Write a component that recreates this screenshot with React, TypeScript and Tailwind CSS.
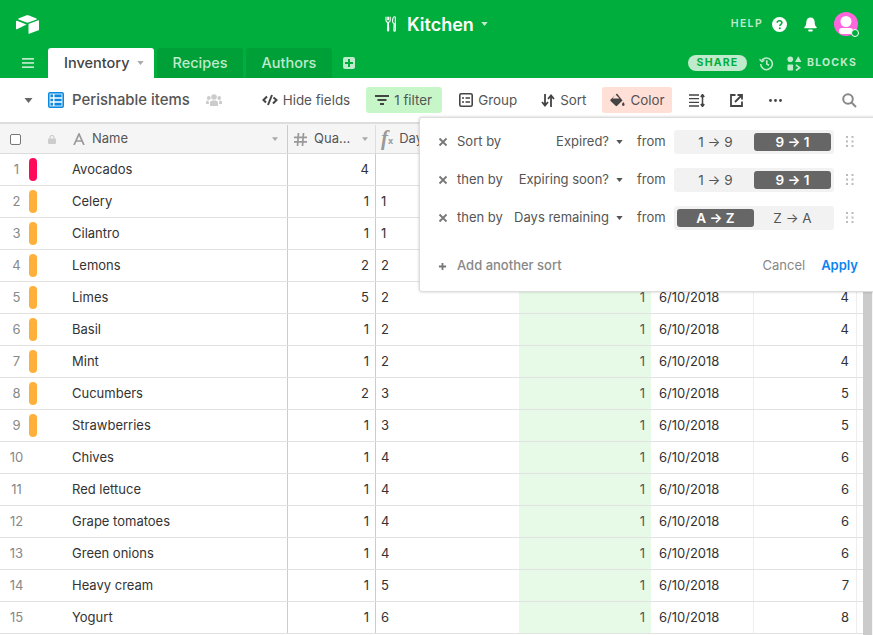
import React from "react";

const rows: [string, string, number, string, string, string][] = [
  ["Avocados", "r", 4, "", "", ""],
  ["Celery", "o", 1, "1", "", ""],
  ["Cilantro", "o", 1, "1", "", ""],
  ["Lemons", "o", 2, "2", "", ""],
  ["Limes", "o", 5, "2", "1", "4"],
  ["Basil", "o", 1, "2", "1", "4"],
  ["Mint", "o", 1, "2", "1", "4"],
  ["Cucumbers", "o", 2, "3", "1", "5"],
  ["Strawberries", "o", 1, "3", "1", "5"],
  ["Chives", "", 1, "4", "1", "6"],
  ["Red lettuce", "", 1, "4", "1", "6"],
  ["Grape tomatoes", "", 1, "4", "1", "6"],
  ["Green onions", "", 1, "4", "1", "6"],
  ["Heavy cream", "", 1, "5", "1", "7"],
  ["Yogurt", "", 1, "6", "1", "8"],
];

function Caret({ className }: { className: string }) {
  return (
    <svg viewBox="0 0 8 5" className={className} fill="currentColor">
      <path d="M0 0h8L4 5z" />
    </svg>
  );
}

function Logo() {
  return (
    <svg viewBox="0 0 23 19" className="h-[19px] w-[23px]" fill="white">
      <path d="M10.600.3 2.500 3.400c-.4.200-.4.800 0 1l8.100 3.200c.6.200 1.200.2 1.800 0l8.100-3.200c.4-.2.400-.8 0-1L12.400.3c-.6-.2-1.200-.2-1.800 0z" />
      <path d="M12.500 9.300v9c0 .4.300.6.700.5l9.300-3.500c.3-.1.500-.3.500-.6V5.800c0-.4-.3-.6-.7-.5l-9.300 3.500c-.3.100-.5.300-.5.500z" />
      <path d="M10.500 9.600 1 5.800c-.5-.2-1 .1-1 .6v7.300c0 .4.500.7.900.5l3.600-1.700z" />
    </svg>
  );
}

function Utensils() {
  return (
    <svg viewBox="0 0 12 16" className="h-[16px] w-[12px]" fill="none" stroke="white" strokeWidth="1.100">
      <path d="M1 .8v3.600c0 1.100.8 1.800 1.800 1.900l-.3 8c0 .9 1.200.9 1.200 0l-.3-8c1-.1 1.800-.8 1.800-1.900V.8M2.800.8v3.400M3.500.8v3.400" />
      <path d="M9.500.8C8 .8 7.600 3 7.600 5c0 1.600.7 2.500 1.500 2.700l-.2 6.900c0 .9 1.400.9 1.400 0V1.400c0-.4-.3-.6-.8-.6z" />
    </svg>
  );
}

function TabBtn({ label }: { label: string }) {
  return (
    <div className="flex h-[30px] w-[86px] items-center justify-center rounded-t-[3px] bg-[#00a038] pb-[1px] text-[14.500px] font-medium text-[#bfeacc]">
      {label}
    </div>
  );
}

function ToolBtn({ icon, label, className }: { icon: React.ReactNode; label: string; className: string }) {
  return (
    <div className={`flex h-[26px] items-center gap-[5px] rounded-[3px] text-[13.400px] text-[#555] ${className}`}>
      {icon}
      <span>{label}</span>
    </div>
  );
}

function Toggle({ a, b, active }: { a: string; b: string; active: 0 | 1 }) {
  const on = "flex h-[18px] w-[77px] items-center justify-center rounded-[3px] bg-[#666] font-semibold text-white";
  const off = "flex h-[18px] w-[77px] items-center justify-center text-[#555]";
  return (
    <div className="flex h-[24px] w-[160px] items-center rounded-[3px] bg-[#f2f2f2] px-[3px] text-[13.500px]">
      <div className={active === 0 ? on : off}>{a}</div>
      <div className={active === 1 ? on : off}>{b}</div>
    </div>
  );
}

function X() {
  return (
    <svg viewBox="0 0 10 10" className="h-[10px] w-[10px] shrink-0" stroke="#777" strokeWidth="1.800" fill="none">
      <path d="M1.500 1.500l7 7M8.500 1.500l-7 7" />
    </svg>
  );
}

function Dots() {
  return (
    <svg viewBox="0 0 8 12" className="h-[12px] w-[8px]" fill="#bbb">
      {[0, 4.500, 9].map((y) => (
        <g key={y}>
          <rect x="0" y={y} width="2" height="2" />
          <rect x="5.500" y={y} width="2" height="2" />
        </g>
      ))}
    </svg>
  );
}

function SortRow({ by, field, a, b, active }: { by: string; field: string; a: string; b: string; active: 0 | 1 }) {
  return (
    <div className="flex h-[24px] items-center text-[13px] text-[#555]">
      <X />
      <span className="ml-[9px] w-[50px] shrink-0">{by}</span>
      <div className="flex w-[116px] items-center justify-end gap-[7px] whitespace-nowrap">
        <span>{field}</span>
        <Caret className="h-[4px] w-[7px] text-[#555]" />
      </div>
      <span className="ml-[14px] w-[37px]">from</span>
      <Toggle a={a} b={b} active={active} />
      <div className="ml-[12px]">
        <Dots />
      </div>
    </div>
  );
}

export default function App() {
  return (
    <div
      className="relative flex h-[635px] w-[873px] flex-col overflow-hidden bg-white"
      style={{ fontFamily: "Inter, 'Liberation Sans', sans-serif" }}
    >
      {/* Green header */}
      <div className="h-[78px] shrink-0 bg-[#00ae3d]">
        <div className="flex h-[48px] items-center pl-[16px] pr-[15px]">
          <Logo />
          <div className="ml-[346px] flex items-center">
            <Utensils />
            <span className="ml-[10px] text-[18px] font-semibold text-white">Kitchen</span>
            <Caret className="ml-[7px] h-[4px] w-[7px] text-[#bfeacc]" />
          </div>
          <div className="ml-auto flex items-center">
            <span className="text-[10.500px] font-semibold tracking-[1.350px] text-[#bfeacc]">HELP</span>
            <svg viewBox="0 0 16 16" className="ml-[9px] h-[15px] w-[15px]">
              <circle cx="8" cy="8" r="8" fill="white" />
              <path d="M5.500 6.200C5.600 4.700 6.700 4 8 4c1.500 0 2.500.9 2.500 2.100 0 1-.6 1.500-1.300 2-.6.4-.8.7-.8 1.400" fill="none" stroke="#00ae3d" strokeWidth="1.700" />
              <circle cx="8.300" cy="12" r="1.100" fill="#00ae3d" />
            </svg>
            <svg viewBox="0 0 14 16" className="ml-[17px] h-[15px] w-[13px]" fill="white">
              <path d="M7 .5c-2.700 0-4.500 2-4.500 4.800 0 3.200-.8 4.400-2 5.500-.4.400-.2 1.200.4 1.200h12.200c.6 0 .8-.8.400-1.200-1.200-1.100-2-2.300-2-5.500C11.500 2.500 9.700.5 7 .5z" />
              <rect x="4.500" y="13.500" width="5" height="2" rx="1" />
            </svg>
            <div className="relative ml-[17px] h-[24px] w-[24px] rounded-full bg-[#ff66dd]">
              <svg viewBox="0 0 24 24" className="h-[24px] w-[24px]" fill="white">
                <circle cx="12" cy="9.500" r="5.500" />
                <rect x="5" y="16" width="14" height="6" rx="3" />
              </svg>
              <div className="absolute right-[-1px] bottom-[-1px] h-[8px] w-[8px] rounded-full border border-white bg-[#00ae3d]" />
            </div>
          </div>
        </div>
        <div className="flex h-[30px] items-end pr-[16px]">
          <div className="flex h-[30px] w-[48px] items-center justify-center">
            <svg viewBox="0 0 12 10" className="ml-[8px] h-[10px] w-[12px]" fill="#bfeacc">
              <rect width="12" height="1.700" />
              <rect y="4.100" width="12" height="1.700" />
              <rect y="8.300" width="12" height="1.700" />
            </svg>
          </div>
          <div className="flex h-[30px] w-[106px] items-center rounded-t-[3px] bg-white pb-[1px] pl-[16px] text-[14.500px] font-medium text-[#444]">
            <span>Inventory</span>
            <Caret className="ml-[8px] h-[4px] w-[7px] text-[#aaa]" />
          </div>
          <div className="ml-[3px]">
            <TabBtn label="Recipes" />
          </div>
          <div className="ml-[3px]">
            <TabBtn label="Authors" />
          </div>
          <div className="mb-[9px] ml-[11px] flex h-[12px] w-[12px] items-center justify-center rounded-[2px] bg-[#bfeacc]">
            <svg viewBox="0 0 8 8" className="h-[8px] w-[8px]" fill="#00ae3d">
              <rect x="3" width="2" height="8" />
              <rect y="3" width="8" height="2" />
            </svg>
          </div>
          <div className="mb-[7px] ml-auto flex items-center">
            <div className="flex h-[16px] w-[59px] items-center justify-center rounded-full bg-[#bfeacc] text-[10.500px] font-bold tracking-[1.200px] text-[#00ae3d]">
              SHARE
            </div>
            <svg viewBox="0 0 16 16" className="ml-[12px] h-[15px] w-[15px]" fill="none" stroke="#bfeacc" strokeWidth="1.700">
              <path d="M2.800 5A6.200 6.200 0 1 1 1.800 8.500" />
              <path d="M.6 3.500l2.500 2.600 2.600-1.400" strokeWidth="1.300" />
              <path d="M8.300 4.500v4l2.500 1.500" />
            </svg>
            <svg viewBox="0 0 16 16" className="ml-[13px] h-[15px] w-[15px]" fill="#bfeacc">
              <circle cx="3.500" cy="3.500" r="3" />
              <path d="M12 .3l3.500 6.200h-7z" />
              <rect x=".5" y="9" width="6" height="6.500" rx="1" />
              <path d="M9.500 9.500l4 3-4 3" fill="none" stroke="#bfeacc" strokeWidth="1.800" />
            </svg>
            <span className="ml-[5px] text-[10.500px] font-bold tracking-[1.200px] text-[#bfeacc]">BLOCKS</span>
          </div>
        </div>
      </div>

      {/* Toolbar */}
      <div className="flex h-[46px] shrink-0 items-center border-b-2 border-[#ddd] pl-[24px]">
        <Caret className="h-[5px] w-[9px] text-[#666]" />
        <svg viewBox="0 0 16 16" className="ml-[15px] h-[16px] w-[16px]">
          <rect width="16" height="16" rx="2" fill="#0b88e0" />
          <path d="M5.700 2v12M2 6h12M2 10h12" stroke="white" strokeWidth="1.500" fill="none" />
          <rect x="2" y="2" width="12" height="12" fill="none" stroke="white" strokeWidth=".8" />
        </svg>
        <span className="ml-[8px] whitespace-nowrap text-[14.900px] font-medium text-[#555]">Perishable items</span>
        <svg viewBox="0 0 16 12" className="ml-[16px] h-[12px] w-[16px]" fill="#ccc">
          <circle cx="8" cy="3" r="2.800" />
          <circle cx="2.800" cy="4" r="1.900" />
          <circle cx="13.200" cy="4" r="1.900" />
          <path d="M4 12V8.500C4 7 5.500 6.500 8 6.500s4 .5 4 2V12z" />
          <path d="M0 10V8c0-1 1-1.500 2.500-1.500L3 10zM16 10V8c0-1-1-1.500-2.500-1.500L13 10z" />
        </svg>
        <ToolBtn
          className="ml-[40px]"
          label="Hide fields"
          icon={
            <svg viewBox="0 0 16 12" className="h-[12px] w-[16px]" fill="none" stroke="#444" strokeWidth="2">
              <path d="M5 2.500 1.500 6 4 8.500M11.500 3.500 14.500 6 11 9.500M10 1 6 11" />
            </svg>
          }
        />
        <ToolBtn
          className="ml-[16px] w-[76px] bg-[#c7f7c9] pl-[9px]"
          label="1 filter"
          icon={
            <svg viewBox="0 0 14 10" className="h-[10px] w-[14px]" fill="#444">
              <rect width="14" height="2" />
              <rect x="2.500" y="4" width="9" height="2" />
              <rect x="5" y="8" width="4" height="2" />
            </svg>
          }
        />
        <ToolBtn
          className="ml-[17px]"
          label="Group"
          icon={
            <svg viewBox="0 0 14 14" className="h-[14px] w-[14px]" fill="none" stroke="#444" strokeWidth="1.600">
              <rect x=".8" y=".8" width="12.400" height="12.400" rx="1.500" />
              <path d="M3 5h2M6.500 5H11M3 9h2M6.500 9H11" />
            </svg>
          }
        />
        <ToolBtn
          className="ml-[24px] gap-[5px]"
          label="Sort"
          icon={
            <svg viewBox="0 0 14 13" className="h-[13px] w-[14px]" fill="none" stroke="#444" strokeWidth="1.800">
              <path d="M4 0v11M1 8l3 3.500L7 8M10 13V2M7 5l3-3.500L13 5" />
            </svg>
          }
        />
        <ToolBtn
          className="ml-[16px] w-[70px] bg-[#ffdfd6] pl-[8px]"
          label="Color"
          icon={
            <svg viewBox="0 0 15 14" className="h-[14px] w-[15px]" fill="#444">
              <path d="M7 .5 5.500 2 .6 6.500c-.5.5-.5 1 0 1.500l5 4.800c.5.500 1 .5 1.500 0L12.500 7.500z" />
              <path d="M5.500 1.500 9.500 5.500H2.500z" fill="#ffdfd6" />
              <path d="M13.300 9c.7 1 1.300 1.700 1.300 2.600a1.300 1.300 0 0 1-2.600 0c0-.9.600-1.600 1.300-2.600z" />
            </svg>
          }
        />
        <svg viewBox="0 0 16 13" className="ml-[17px] h-[13px] w-[16px]" fill="none" stroke="#444" strokeWidth="1.300">
          <path d="M0 1h10M0 4.700h10M0 8.300h10M0 12h10" />
          <path d="M13.500 1v11M11.800 3l1.700-2.500L15.200 3M11.800 10l1.700 2.500 1.700-2.500" strokeWidth="1.500" />
        </svg>
        <svg viewBox="0 0 13 13" className="ml-[25px] h-[13px] w-[13px]" fill="none" stroke="#444" strokeWidth="1.800">
          <path d="M5.500 1H1v11h11V7.500" />
          <path d="M5 8l6-6M7.500 1H12v4.500" />
        </svg>
        <svg viewBox="0 0 13 3" className="ml-[26px] h-[3px] w-[13px]" fill="#444">
          <circle cx="1.500" cy="1.500" r="1.400" />
          <circle cx="6.500" cy="1.500" r="1.400" />
          <circle cx="11.500" cy="1.500" r="1.400" />
        </svg>
        <svg viewBox="0 0 15 15" className="ml-[60px] h-[15px] w-[15px]" fill="none" stroke="#888" strokeWidth="2">
          <circle cx="6" cy="6" r="4.800" />
          <path d="M9.500 9.500l4.500 4.500" />
        </svg>
      </div>

      {/* Table */}
      <div className="flex min-h-0 flex-1">
        <div className="w-[863px] shrink-0">
          <div className="flex h-[30px] items-center border-b border-[#ddd] bg-[#f5f5f5] pt-[1px] text-[13px] text-[#555]">
            <div className="flex h-full w-[288px] shrink-0 items-center border-r border-[#ccc] pl-[10px]">
              <div className="h-[11px] w-[11px] rounded-[2px] border border-[#777] bg-white" />
              <svg viewBox="0 0 8 9" className="ml-[27px] h-[9px] w-[8px]" fill="#ccc">
                <rect y="3.500" width="8" height="5.500" rx="1" />
                <path d="M2 4V2.500a2 2 0 0 1 4 0V4" fill="none" stroke="#ccc" strokeWidth="1.200" />
              </svg>
              <svg viewBox="0 0 12 12" className="ml-[17px] h-[12px] w-[12px]" fill="none" stroke="#999" strokeWidth="1.700">
                <path d="M1 12 6 1l5 11M3 8h6" />
              </svg>
              <span className="ml-[7px]">Name</span>
              <Caret className="ml-auto mr-[9px] h-[4px] w-[6px] text-[#aaa]" />
            </div>
            <div className="flex h-full w-[88px] shrink-0 items-center border-r border-[#ddd] pl-[6px]">
              <svg viewBox="0 0 13 13" className="h-[13px] w-[13px]" fill="none" stroke="#999" strokeWidth="1.700">
                <path d="M4.500 0 3.500 13M9.500 0l-1 13M0 4.300h13M0 8.800h13" />
              </svg>
              <span className="ml-[7px]">Qua...</span>
              <Caret className="ml-[12px] h-[4px] w-[6px] text-[#aaa]" />
            </div>
            <div className="flex h-full min-w-0 flex-1 items-center pl-[5px]">
              <span className="font-['Liberation_Serif'] text-[21px] font-bold italic text-[#999]">f</span>
              <span className="mt-[4px] text-[9px] font-bold text-[#999]">x</span>
              <span className="ml-[6px]">Days</span>
            </div>
          </div>
          {rows.map((r, i) => (
            <div key={r[0]} className="flex h-[32px] border-b border-[#e2e2e2] text-[13px] text-[#333]">
              <div className="flex w-[288px] shrink-0 items-center border-r border-[#ccc]">
                <span className="w-[29px] pl-[4px] text-center text-[#888]">{i + 1}</span>
                <div className="w-[8px]">
                  {r[1] && <div className={r[1] === "r" ? "h-[23px] w-[8px] rounded-full bg-[#ff0a5b]" : "h-[23px] w-[8px] rounded-full bg-[#ffb03b]"} />}
                </div>
                <span className="ml-[35px]">{r[0]}</span>
              </div>
              <div className="flex w-[88px] shrink-0 items-center justify-end border-r border-[#ccc] pr-[6px]">{r[2]}</div>
              <div className="flex w-[143px] shrink-0 items-center pl-[5px]">{r[3]}</div>
              <div className="flex w-[132px] shrink-0 items-center justify-end bg-[#e7fae7] pr-[6px] text-[#555]">{r[4]}</div>
              <div className="flex w-[103px] shrink-0 items-center border-r border-[#eee] pl-[8px]">{r[4] ? "6/10/2018" : ""}</div>
              <div className="flex w-[103px] shrink-0 items-center justify-end border-r border-[#eee] pr-[7px]">{r[5]}</div>
            </div>
          ))}
        </div>
        <div className="w-[10px] bg-[#f7f7f7]">
          <div className="h-full w-[9px] bg-[#cbcbcb]" />
        </div>
      </div>

      {/* Sort popover */}
      <div className="absolute left-[419px] top-[117px] flex h-[175px] w-[460px] flex-col rounded-[3px] border border-[#ddd] bg-white pl-[18px] pt-[12px] shadow-[0_0_3px_rgba(0,0,0,0.2)]">
        <div className="flex flex-col gap-[14px]">
          <SortRow by="Sort by" field="Expired?" a="1 → 9" b="9 → 1" active={1} />
          <SortRow by="then by" field="Expiring soon?" a="1 → 9" b="9 → 1" active={1} />
          <SortRow by="then by" field="Days remaining" a="A → Z" b="Z → A" active={0} />
        </div>
        <div className="mt-[24px] flex h-[24px] w-[420px] items-center text-[13px]">
          <svg viewBox="0 0 10 10" className="h-[9px] w-[9px]" stroke="#777" strokeWidth="2">
            <path d="M5 1v8M1 5h8" />
          </svg>
          <span className="ml-[10px] font-medium text-[#888]">Add another sort</span>
          <span className="ml-auto text-[#888]">Cancel</span>
          <span className="ml-[16px] font-semibold text-[#0d84f0]">Apply</span>
        </div>
      </div>
    </div>
  );
}
